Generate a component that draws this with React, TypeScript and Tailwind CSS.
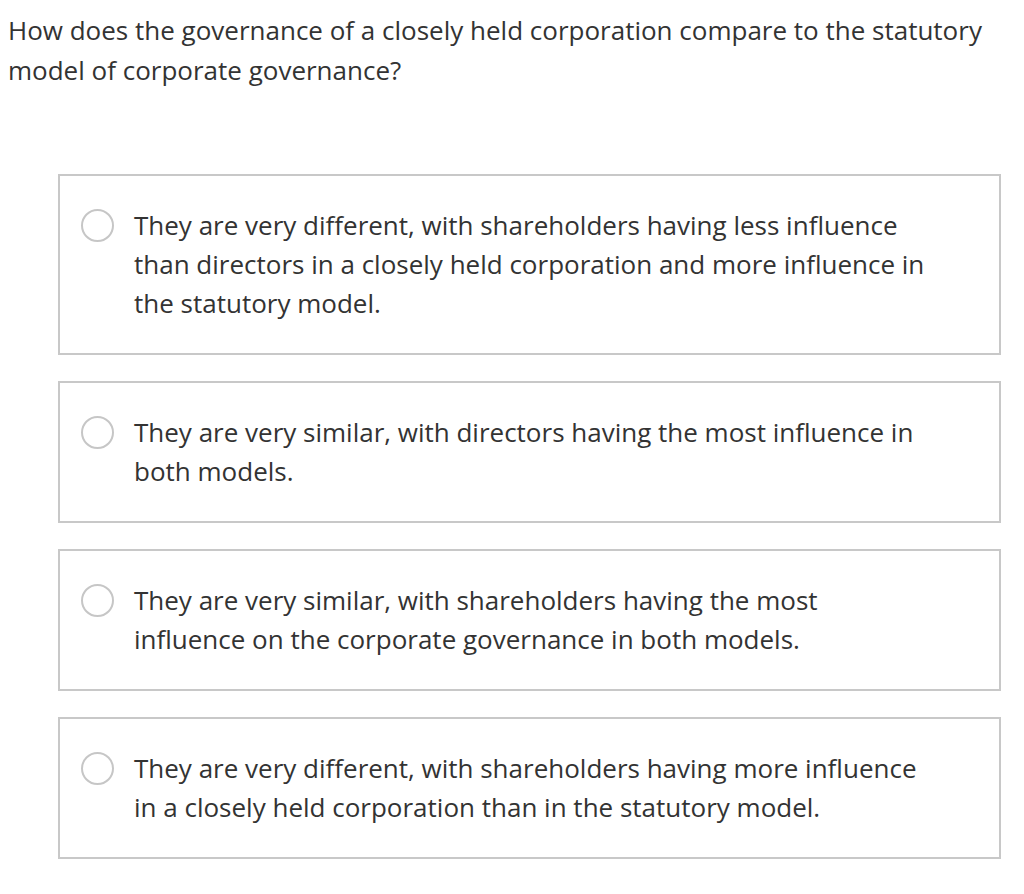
const options = [
  "They are very different, with shareholders having less influence than directors in a closely held corporation and more influence in the statutory model.",
  "They are very similar, with directors having the most influence in both models.",
  "They are very similar, with shareholders having the most influence on the corporate governance in both models.",
  "They are very different, with shareholders having more influence in a closely held corporation than in the statutory model.",
];

export default function App() {
  return (
    <div className="min-h-screen bg-white font-['Open_Sans',sans-serif] text-[#333333]">
      <div className="pl-[8px] pr-[30px] pt-[10px]">
        <p className="text-[26px] leading-[40px]">
          How does the governance of a closely held corporation compare to the statutory model of corporate governance?
        </p>
      </div>

      <div className="ml-[58px] mr-[23px] mt-[84px] flex flex-col gap-[26px]">
        {options.map((text, i) => (
          <label
            key={i}
            className="flex items-start border-2 border-[#c8c8c8] bg-white py-[30px] pl-[21px] pr-[70px] cursor-pointer"
          >
            <span className="mt-[3px] h-[33px] w-[33px] shrink-0 rounded-full border-2 border-[#c6c6c6] bg-white" />
            <span className="ml-[20px] text-[26px] leading-[39px]">{text}</span>
          </label>
        ))}
      </div>
    </div>
  );
}
